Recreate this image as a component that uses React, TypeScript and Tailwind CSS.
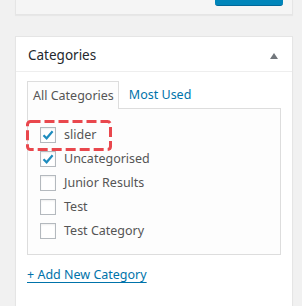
import React from 'react'

const font = { fontFamily: '"Segoe UI", "Noto Sans", sans-serif' }

const cats = [
  { name: 'slider', checked: true },
  { name: 'Uncategorised', checked: true },
  { name: 'Junior Results', checked: false },
  { name: 'Test', checked: false },
  { name: 'Test Category', checked: false },
]

function Check({ checked }: { checked: boolean }) {
  return (
    <span className="flex h-4 w-4 shrink-0 items-center justify-center border border-[#b4b9be] bg-white shadow-[inset_0_1px_2px_rgba(0,0,0,0.07)]">
      {checked && (
        <svg width="14" height="14" viewBox="0 0 14 14">
          <path d="M2.5 7.2 L5.6 10.3 L11.6 3.2" fill="none" stroke="#1e8cbe" strokeWidth="2.2" />
        </svg>
      )}
    </span>
  )
}

export default function App() {
  return (
    <div className="h-[306px] w-[302px] overflow-hidden bg-[#f1f1f1] text-[12.5px]" style={font}>
      {/* previous box */}
      <div className="ml-[15px] flex h-[15px] w-[278px] justify-end border border-t-0 border-[#e5e5e5] bg-[#f5f5f5] pr-[9px] shadow-[0_1px_1px_rgba(0,0,0,0.04)]">
        <div className="h-[6px] w-[68px] rounded-b-[3px] border-b border-[#006799] bg-[#0085ba]" />
      </div>

      {/* categories box */}
      <div className="ml-[15px] mt-[21px] w-[278px] border border-[#e5e5e5] bg-white shadow-[0_1px_1px_rgba(0,0,0,0.04)]">
        <div className="flex h-[35px] items-center justify-between border-b border-[#eee] pl-[12px] pr-[14px] pt-[3px]">
          <span className="text-[13.5px] leading-none text-[#23282d]">Categories</span>
          <span className="h-0 w-0 border-x-[4px] border-b-[6px] border-x-transparent border-b-[#72777c]" />
        </div>

        <div className="px-[11px] pb-[26px] pt-[9px]">
          <div className="flex items-end">
            <div className="relative z-10 -mb-px flex h-[28px] items-center border border-b-0 border-[#ddd] bg-[#fdfdfd] pl-[5px] pr-[4px] pt-[2px] text-[#555]">
              All Categories
            </div>
            <div className="flex h-[27px] items-center pl-[10px] pt-[2px] text-[#0073aa]">Most Used</div>
          </div>

          <div className="h-[147px] border border-[#ddd] bg-[#fdfdfd] pl-[12px] pt-[14px]">
            {cats.map((c, i) => (
              <div key={c.name} className="relative flex h-[24px] items-center gap-[8px] text-[#555]">
                <Check checked={c.checked} />
                <span className="leading-none">{c.name}</span>
                {i === 0 && (
                  <svg className="absolute left-[-14px] top-[-3px]" width="86" height="31" viewBox="0 0 86 31">
                    <rect x="1.5" y="1.5" width="83" height="28" rx="3" fill="none" stroke="#e9474d" strokeWidth="3" strokeDasharray="10 4" />
                  </svg>
                )}
              </div>
            ))}
          </div>

          <a className="mt-[14px] inline-block leading-none text-[#0073aa] underline underline-offset-[3px]">+ Add New Category</a>
        </div>
      </div>
    </div>
  )
}
